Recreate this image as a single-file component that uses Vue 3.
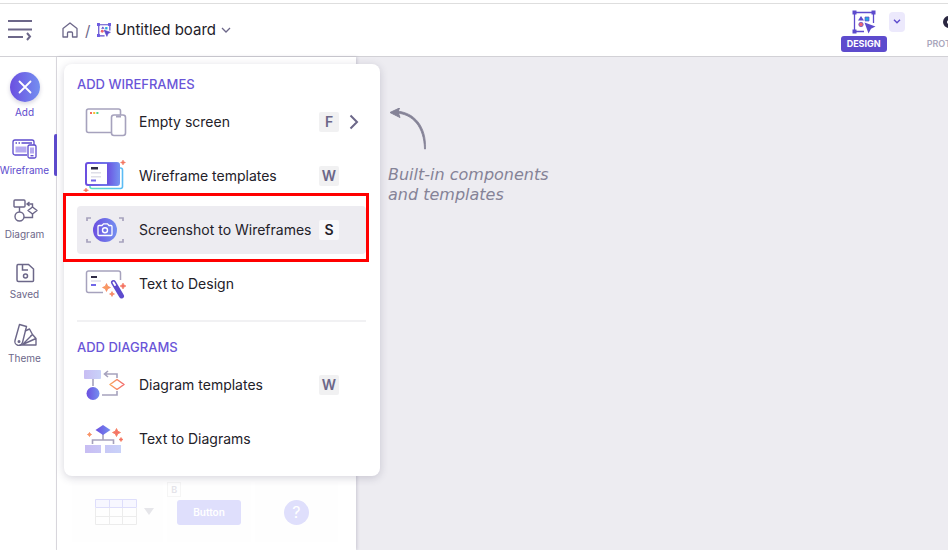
<template>
  <div class="app">
    <header class="topbar">
      <button class="icon-btn" aria-label="Toggle menu">
        <svg width="26" height="24" viewBox="0 0 26 24" fill="none" stroke="#6c6789" stroke-width="2">
          <path d="M1 3h24M1 11.500h24M1 19h15" />
          <path d="M20 15l3 3.500-3 3.500" />
        </svg>
      </button>
      <nav class="crumbs" aria-label="Breadcrumb">
        <a href="#" class="home" aria-label="Home">
          <svg width="16" height="16" viewBox="0 0 16 16" fill="none" stroke="#6c6789" stroke-width="1.300" stroke-linejoin="round">
            <path d="M1 6.500L8 1l7 5.500V15h-4.500v-4a1 1 0 0 0-1-1h-3a1 1 0 0 0-1 1v4H1z" />
          </svg>
        </a>
        <span class="slash">/</span>
        <button class="board">
          <svg width="14" height="14" viewBox="0 0 24 24">
            <path d="M13 22H3V3h19v10" fill="none" stroke="#5d4bcd" stroke-width="2" />
            <path d="M0 0h5v5H0zM19 0h5v5h-5zM0 19h5v5H0z" fill="#6d5ce0" />
            <path d="M10 6l3 4H7z" fill="#5d4bcd" />
            <path d="M14 7h4v4h-4z" fill="#27a6dd" />
            <circle cx="9" cy="14" r="2.500" fill="#ee6571" />
            <path d="M12 12l11 4-4 2-2 5z" fill="#5d4bcd" stroke="#5d4bcd" />
          </svg>
          <span>Untitled board</span>
          <svg class="caret" width="10" height="6" viewBox="0 0 10 6" fill="none" stroke="#6c6789" stroke-width="1.300">
            <path d="M1 1l4 4 4-4" />
          </svg>
        </button>
      </nav>
      <div class="modes">
        <button class="mode active">
          <svg width="24" height="24" viewBox="0 0 24 24">
            <path d="M12 21.500H2.500v-19h19V13" fill="none" stroke="#5d4bcd" stroke-width="1.300" />
            <path d="M.5.500h4v4h-4zM19.500.500h4v4h-4zM.5 19.500h4v4h-4z" fill="#5d4bcd" />
            <path d="M9 6l3 4.500H6z" fill="#5d4bcd" />
            <path d="M13 7h4v4h-4z" fill="#27a6dd" stroke="#5d4bcd" stroke-width=".7" />
            <circle cx="9" cy="14.500" r="2.200" fill="#ee6571" stroke="#5d4bcd" stroke-width=".7" />
            <path d="M12.500 12.500l11 4-4.500 2.200-2.500 4.800z" fill="#5d4bcd" />
          </svg>
          <span>DESIGN</span>
        </button>
        <button class="mode-more" aria-label="More modes">
          <svg width="8" height="5" viewBox="0 0 8 5" fill="none" stroke="#5d4bcd" stroke-width="1.400">
            <path d="M1 .7l3 3 3-3" />
          </svg>
        </button>
        <button class="mode">
          <svg width="24" height="24" viewBox="0 0 24 24">
            <circle cx="7" cy="12" r="4" fill="none" stroke="#2a2740" stroke-width="4" />
            <path d="M11 12h8" stroke="#2a2740" stroke-width="2" />
          </svg>
          <span>PROTOTYPE</span>
        </button>
      </div>
    </header>

    <div class="workspace">
      <nav class="sidebar" aria-label="Tools">
        <button class="tool add">
          <span class="add-circle">
            <svg width="14" height="14" viewBox="0 0 14 14" stroke="#fff" stroke-width="1.800" stroke-linecap="round">
              <path d="M1.500 1.500l11 11M12.500 1.500l-11 11" />
            </svg>
          </span>
          <span>Add</span>
        </button>
        <button class="tool active">
          <svg width="25" height="20" viewBox="0 0 25 20" fill="none" stroke="#5d4bcd" stroke-width="1.300">
            <path d="M3.500 7.500h11v6h-11z" fill="#b6aaf0" stroke="none" />
            <path d="M15 16H3a2 2 0 0 1-2-2V3a2 2 0 0 1 2-2h17a2 2 0 0 1 2 2v3" />
            <path d="M3.500 4H5M6.500 4H8M9.500 4H20" />
            <rect x="16" y="6" width="8" height="13" rx="1.500" fill="#fff" />
            <path d="M18 8.500h4v6h-4z" fill="#b6aaf0" stroke="none" />
            <path d="M18.500 16.700h3" />
          </svg>
          <span>Wireframe</span>
        </button>
        <button class="tool">
          <svg width="26" height="24" viewBox="0 0 26 24" fill="none" stroke="#6c6789" stroke-width="1.400">
            <rect x="2" y="1" width="11" height="7" rx="1" />
            <path d="M7.500 8v5M12 18.500H20.500V15M15 5H20.500V8M17.500 3L15 5l2.500 2" />
            <circle cx="7.500" cy="17.500" r="4.500" />
            <path d="M20.500 8l4.500 3.500-4.500 3.500-4.500-3.500z" fill="#fff" stroke-linejoin="round" />
          </svg>
          <span>Diagram</span>
        </button>
        <button class="tool">
          <svg width="20" height="20" viewBox="0 0 20 20" fill="none" stroke="#6c6789" stroke-width="1.500">
            <path d="M3 1.500h10.500l5 4.500v11.500a1 1 0 0 1-1 1h-14a1.500 1.500 0 0 1-1.500-1.500V3A1.500 1.500 0 0 1 3 1.500z" />
            <path d="M7.500 2v5H13" />
            <circle cx="10.500" cy="13" r="2" />
          </svg>
          <span>Saved</span>
        </button>
        <button class="tool">
          <svg width="24" height="24" viewBox="0 0 24 24" fill="none" stroke="#6c6789" stroke-width="1.400" stroke-linejoin="round">
            <path d="M6.500 1.500l7 2-4 16a3.800 3.800 0 0 1-7.500-2z" />
            <path d="M12 8l4.500-2 3 5.500-10 10M17.500 13l2-1.500 3.500 4v6.500H6.500M9.500 21.500L23 15.500" />
            <circle cx="6" cy="18.500" r=".8" fill="#6c6789" />
          </svg>
          <span>Theme</span>
        </button>
      </nav>

      <aside class="panel">
        <div class="components">
          <div class="component">
            <svg width="42" height="26" viewBox="0 0 42 26" fill="none">
              <path d="M.5 9v16.500h41V9M.5 17.500h41M14.500 9v16.500M27.500 9v16.500" stroke="#ececec" />
              <path d="M.5.500h41v8H.5zM14.500.500v8M27.500.500v8" fill="#f7f7ff" stroke="#dedefb" />
            </svg>
            <svg width="12" height="8" viewBox="0 0 12 8"><path d="M1 0h10L6 7z" fill="#e6e6ea" /></svg>
          </div>
          <div class="component">
            <kbd class="tag">B</kbd>
            <span class="sample-btn">Button</span>
          </div>
          <div class="component">
            <span class="sample-help">?</span>
          </div>
        </div>
      </aside>

      <main class="canvas">
        <svg class="arrow" width="40" height="44" viewBox="0 0 40 44">
          <path d="M8 5C25 6 36 19 36.500 41L37.500 41C38.500 18 26 4 8 3z" fill="#858397" stroke="#858397" stroke-width=".8" />
          <path d="M2 4.500L11.500 0 10 4l2 5.500z" fill="#858397" stroke="#858397" stroke-linejoin="round" />
        </svg>
        <p class="hint">Built-in components<br />and templates</p>
      </main>

      <div class="add-menu">
        <svg class="defs" width="0" height="0" aria-hidden="true">
          <linearGradient id="violet"><stop stop-color="#6b4fe0" /><stop offset="1" stop-color="#748ff0" /></linearGradient>
          <linearGradient id="pale"><stop stop-color="#c8bdf3" /><stop offset="1" stop-color="#c9d2f9" /></linearGradient>
          <linearGradient id="aqua"><stop stop-color="#5de0c0" /><stop offset="1" stop-color="#5bbcf5" /></linearGradient>
          <linearGradient id="warm"><stop stop-color="#f9a45c" /><stop offset="1" stop-color="#f2696b" /></linearGradient>
        </svg>
        <section v-for="group in groups" :key="group.title" class="group">
          <h2>{{ group.title }}</h2>
          <button
            v-for="item in group.items"
            :key="item.label"
            class="item"
            :class="{ selected: item.selected }"
          >
            <svg v-if="item.icon === 'screen'" width="44" height="32" viewBox="0 0 44 32" fill="none" stroke="#a6a2bd" stroke-width="1.600">
              <rect x="3.500" y="3" width="34" height="23.500" rx="2" />
              <path d="M7 6h2v2H7z" fill="#f26b5e" stroke="none" />
              <path d="M10.200 6h2v2h-2z" fill="#f5bd2f" stroke="none" />
              <path d="M13.400 6h2v2h-2z" fill="#4ed08a" stroke="none" />
              <rect x="28.500" y="9" width="14" height="20.500" rx="2.500" fill="#fff" />
              <path d="M33 10.500h5" stroke-width="2" />
            </svg>
            <svg v-else-if="item.icon === 'templates'" width="44" height="32" viewBox="0 0 44 32">
              <path d="M7 25v1.500a2 2 0 0 0 2 2h28.500a2 2 0 0 0 2-2V10a2 2 0 0 0-2-2H37" fill="none" stroke="url(#aqua)" stroke-width="1.600" />
              <rect x="3" y="3" width="33" height="22" rx="2" fill="#fff" stroke="url(#violet)" stroke-width="2" />
              <path d="M24 3h12v22H24z" fill="url(#violet)" />
              <path d="M8 7h7v2.500H8z" fill="#302c45" />
              <path d="M8 12h10v1.500H8zM8 16h10v1.500H8z" fill="#dedee8" />
              <path d="M8 19.500h5V21.500H8z" fill="#7167e8" />
              <path d="M40 0l.8 1.700 1.700.8-1.700.8L40 5l-.8-1.700-1.700-.8 1.700-.8zM3 28l.7 1.500 1.800.8-1.800.7L3 32l-.7-1-1.800-.7 1.800-.8z" fill="#f2755f" stroke="#f2755f" stroke-width=".5" />
            </svg>
            <svg v-else-if="item.icon === 'camera'" width="44" height="32" viewBox="0 0 44 32" fill="none">
              <path d="M4 7V4h4M36 4h4v3M4 25v3h4M36 28h4v-3" stroke="#a6a2bd" stroke-width="1.700" />
              <circle cx="22" cy="16" r="12" fill="url(#violet)" />
              <path d="M17 11.500h2l1.500-1.700h4l1.500 1.700h2a1 1 0 0 1 1 1v8a1 1 0 0 1-1 1H16a1 1 0 0 1-1-1v-8a1 1 0 0 1 1-1z" stroke="#fff" stroke-width="1.300" />
              <circle cx="22" cy="16.200" r="2.500" stroke="#fff" stroke-width="1.400" />
            </svg>
            <svg v-else-if="item.icon === 'wand'" width="44" height="32" viewBox="0 0 44 32">
              <path d="M20 24.500H5.500a2 2 0 0 1-2-2V5a2 2 0 0 1 2-2h30a2 2 0 0 1 2 2v7" fill="none" stroke="#a6a2bd" stroke-width="1.500" />
              <path d="M8 9h6" stroke="#302c45" stroke-width="2" />
              <path d="M8 13h10" stroke="#e1dfea" stroke-width="1.500" />
              <path d="M8 17h5" stroke="#7167e8" stroke-width="2" />
              <path d="M30.500 14.500l8 13.500" stroke="#5d4bcd" stroke-width="5" stroke-linecap="round" />
              <path d="M30.500 14.500l1.500 2.500" stroke="#fff" stroke-width="2" stroke-linecap="round" />
              <path d="M23.500 15.500l1.300 2.700 2.700 1.300-2.700 1.300-1.300 2.700-1.300-2.700-2.700-1.300 2.700-1.300zM40 15l1 2 2 1-2 1-1 2-1-2-2-1 2-1zM29 23.500l.8 1.700 1.700.8-1.700.8-.8 1.700-.8-1.700-1.700-.8 1.700-.8z" fill="url(#warm)" stroke="#f67e5d" stroke-width=".6" />
            </svg>
            <svg v-else-if="item.icon === 'flow'" width="44" height="32" viewBox="0 0 44 32" fill="none">
              <path d="M10 10v7M19 26h15v-4M34 9V5H22M25 2l-3.500 3L25 8" stroke="#a6a2bd" stroke-width="1.600" />
              <rect x="1" y="1" width="17" height="9" rx="1" fill="url(#pale)" />
              <circle cx="10" cy="24.500" r="6.500" fill="url(#violet)" />
              <path d="M34 10.500l7 5-7 5-7-5z" stroke="url(#warm)" stroke-width="1.500" stroke-linejoin="round" />
            </svg>
            <svg v-else width="44" height="32" viewBox="0 0 44 32" fill="none">
              <path d="M20 11v6M9.500 21v-4h21v4" stroke="#a6a2bd" stroke-width="1.600" />
              <path d="M20 2l7.500 5-7.500 5-7.500-5z" fill="url(#violet)" />
              <path d="M2 22h16v8H2zM22 22h16v8H22z" fill="url(#pale)" />
              <path d="M33.500 5.500l1.300 2.700 2.700 1.300-2.700 1.300-1.300 2.700-1.300-2.700-2.700-1.300 2.700-1.300zM6.500 9.500l.7 1.300 1.300.7-1.300.7-.7 1.300-.7-1.300-1.300-.7 1.300-.7zM38 14.500l.7 1.300 1.300.7-1.300.7-.7 1.300-.7-1.300-1.300-.7 1.300-.7z" fill="url(#warm)" stroke="#f67e5d" stroke-width=".8" />
            </svg>
            <span class="label">{{ item.label }}</span>
            <kbd v-if="item.key">{{ item.key }}</kbd>
            <svg v-if="item.more" class="more" width="10" height="16" viewBox="0 0 10 16" fill="none" stroke="#6c6789" stroke-width="2">
              <path d="M1.500 1.500L8 8l-6.500 6.500" />
            </svg>
          </button>
        </section>
        <div class="highlight"></div>
      </div>
    </div>
  </div>
</template>

<script setup>
import { ref } from 'vue';

const groups = ref([
  {
    title: 'ADD WIREFRAMES',
    items: [
      { label: 'Empty screen', icon: 'screen', key: 'F', more: true },
      { label: 'Wireframe templates', icon: 'templates', key: 'W' },
      { label: 'Screenshot to Wireframes', icon: 'camera', key: 'S', selected: true },
      { label: 'Text to Design', icon: 'wand' }
    ]
  },
  {
    title: 'ADD DIAGRAMS',
    items: [
      { label: 'Diagram templates', icon: 'flow', key: 'W' },
      { label: 'Text to Diagrams', icon: 'tree' }
    ]
  }
]);
</script>

<style>
body {
  margin: 0;
}
</style>

<style scoped>
.app {
  display: flex;
  flex-direction: column;
  height: 100vh;
  overflow: hidden;
  box-sizing: border-box;
  padding-top: 3px;
  background: #fff;
  color: #232129;
  font-family: Inter, "Liberation Sans", sans-serif;
}

button {
  border: none;
  padding: 0;
  background: none;
  color: inherit;
  font: inherit;
  cursor: pointer;
}

svg {
  display: block;
  flex: none;
}

.topbar {
  display: flex;
  align-items: center;
  height: 52px;
  padding-left: 7px;
  border-top: 1px solid #dedede;
  border-bottom: 1px solid #d2d1d6;
  overflow: hidden;
}

.crumbs {
  display: flex;
  align-items: center;
  margin-left: 29px;
}

.slash {
  margin: 0 7px;
  color: #6c6789;
  font-size: 15px;
}

.board {
  display: flex;
  align-items: center;
  gap: 4px;
  font-size: 15px;
  line-height: 18px;
  white-space: nowrap;
}

.caret {
  margin-left: 1px;
}

.modes {
  display: flex;
  align-items: flex-start;
  margin-left: auto;
  margin-right: -39px;
}

.mode {
  display: flex;
  flex-direction: column;
  align-items: center;
  gap: 2px;
  color: #aaa7bd;
  font-size: 9px;
  font-weight: 600;
  line-height: 16px;
}

.mode svg {
  margin-top: 1px;
}

.mode span {
  padding: 0 6px;
  border-radius: 3px;
}

.mode.active span {
  background: #5d4bcd;
  color: #fff;
  font-weight: 700;
}

.mode-more {
  display: flex;
  align-items: center;
  justify-content: center;
  width: 16px;
  height: 20px;
  margin: 3px 16px 0 2px;
  border-radius: 4px;
  background: #ece9fc;
}

.workspace {
  display: flex;
  flex: 1;
  min-height: 0;
  position: relative;
}

.sidebar {
  display: flex;
  flex-direction: column;
  width: 49px;
  padding: 15px 7px 0 0;
  border-right: 1px solid #dddce1;
}

.tool {
  display: flex;
  flex-direction: column;
  align-items: center;
  gap: 4px;
  position: relative;
  margin-bottom: 22px;
  color: #6c6789;
  font-size: 10px;
  line-height: 14px;
}

.tool.add {
  gap: 3px;
  margin-bottom: 20px;
}

.tool.add,
.tool.active {
  color: #5d4bcd;
}

.tool.active::after {
  content: "";
  position: absolute;
  top: -5px;
  right: -9px;
  width: 4px;
  height: 42px;
  border-radius: 2px;
  background: #5d4bcd;
}

.add-circle {
  display: flex;
  align-items: center;
  justify-content: center;
  width: 30px;
  height: 30px;
  border-radius: 50%;
  background: linear-gradient(90deg, #6b4fe0, #748ff0);
  box-shadow: 0 2px 4px rgba(50, 40, 100, 0.2);
}

.panel {
  display: flex;
  width: 299px;
  flex: none;
  background: #fff;
  box-shadow: 1px 0 3px rgba(60, 55, 90, 0.2);
}

.components {
  display: flex;
  align-items: flex-end;
  gap: 4px;
  width: 100%;
  padding: 0 18px 8px 15px;
}

.component {
  display: flex;
  flex: 1 1 0;
  min-width: 0;
  box-sizing: border-box;
  align-items: center;
  justify-content: center;
  gap: 6px;
  position: relative;
  height: 60px;
  background: #fefefe;
}

.component:first-child {
  justify-content: flex-end;
  padding-right: 8px;
}

.tag {
  position: absolute;
  top: 0;
  left: 0;
  padding: 0 3px;
  border: 1px solid #f5f5f5;
  color: #e4e3e9;
  font-family: inherit;
  font-size: 9px;
  font-weight: 600;
  line-height: 13px;
}

.sample-btn {
  padding: 0 16px;
  border-radius: 3px;
  background: #dfdffc;
  color: #fff;
  font-size: 10px;
  font-weight: 600;
  line-height: 25px;
}

.sample-help {
  width: 25px;
  border-radius: 50%;
  background: #dfdffc;
  color: #fff;
  font-size: 16px;
  line-height: 25px;
  text-align: center;
}

.canvas {
  flex: 1;
  padding: 51px 0 0 32px;
  background: #edecf1;
}

.panel {
  z-index: 1;
}

.hint {
  margin: 13px 0 0;
  color: #858397;
  font-family: "DejaVu Sans", sans-serif;
  font-size: 16px;
  font-style: italic;
  line-height: 20px;
  white-space: nowrap;
}

.add-menu {
  position: absolute;
  top: 7px;
  left: 64px;
  z-index: 2;
  width: 289px;
  padding: 10px 14px 13px 13px;
  border-radius: 8px;
  background: #fff;
  box-shadow: 0 2px 8px rgba(50, 45, 80, 0.2);
}

.defs {
  position: absolute;
}

.group {
  display: flex;
  flex-direction: column;
  gap: 6px;
}

.group + .group {
  margin-top: 12px;
  padding-top: 15px;
  border-top: 2px solid #f1f1f3;
}

.group h2 {
  margin: 0 0 -2px;
  color: #6a55d8;
  font-size: 13px;
  font-weight: 500;
  line-height: 20px;
}

.item {
  display: flex;
  align-items: center;
  height: 48px;
  padding-left: 6px;
  border-radius: 4px;
  font-size: 14px;
  line-height: 20px;
  text-align: left;
}

.item.selected {
  background: #edecf1;
}

.label {
  width: 180px;
  margin-left: 12px;
  white-space: nowrap;
}

kbd {
  color: #6c6789;
  font-family: inherit;
}

.item kbd {
  width: 20px;
  border-radius: 2px;
  background: #f1f1f2;
  font-size: 14px;
  font-weight: 600;
  line-height: 20px;
  text-align: center;
}

.item.selected kbd {
  background: #f8f8fa;
  color: #232129;
}

.more {
  margin-left: 10px;
}

.highlight {
  position: absolute;
  top: 129px;
  left: -1px;
  right: 11px;
  height: 63px;
  border: 3px solid #f00;
}
</style>
